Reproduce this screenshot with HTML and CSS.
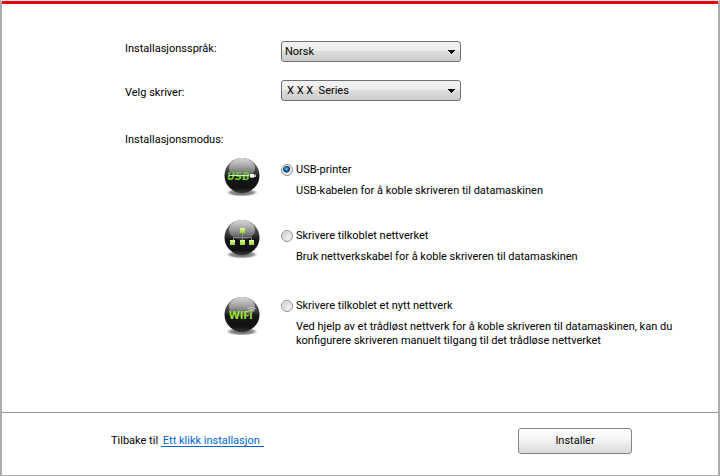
FILE: index.html
```html
<!DOCTYPE html>
<html lang="no">
<head>
<meta charset="utf-8">
<title>Installasjon</title>
<link rel="stylesheet" href="styles.css">
</head>
<body>
<form class="window">
  <main class="content">
    <div class="fields">
      <div class="field-labels">
        <label for="language">Installasjonsspråk:</label>
        <label for="printer">Velg skriver:</label>
      </div>
      <div class="field-inputs">
        <select class="select" id="language"><option>Norsk</option></select>
        <select class="select select-wide-inset" id="printer"><option>X X X&nbsp; Series</option></select>
      </div>
    </div>
    <h2 class="mode-title" id="mode">Installasjonsmodus:</h2>
    <div class="modes" role="radiogroup" aria-labelledby="mode">
      <div class="mode-icons">
        <svg class="icon" viewBox="0 0 38 40" aria-hidden="true">
          <defs>
            <linearGradient id="ball" x1="0" y1="0" x2="0" y2="1">
              <stop offset="0" stop-color="#777"/>
              <stop offset=".4" stop-color="#3c3c3c"/>
              <stop offset=".55" stop-color="#161616"/>
              <stop offset=".85" stop-color="#111"/>
              <stop offset="1" stop-color="#3a3a3a"/>
            </linearGradient>
            <linearGradient id="gloss" x1="0" y1="0" x2="0" y2="1">
              <stop offset="0" stop-color="#fff" stop-opacity=".7"/>
              <stop offset="1" stop-color="#fff" stop-opacity=".15"/>
            </linearGradient>
            <radialGradient id="shade">
              <stop offset="0" stop-color="#444" stop-opacity=".9"/>
              <stop offset=".7" stop-color="#777" stop-opacity=".8"/>
              <stop offset="1" stop-color="#999" stop-opacity="0"/>
            </radialGradient>
            <linearGradient id="node" x1="0" y1="0" x2="0" y2="1">
              <stop offset="0" stop-color="#e4f9a8"/>
              <stop offset="1" stop-color="#8edb1c"/>
            </linearGradient>
            <g id="orb">
              <ellipse cx="19" cy="35.500" rx="16" ry="4" fill="url(#shade)"/>
              <circle cx="19" cy="18.500" r="17.500" fill="url(#ball)"/>
              <ellipse cx="19" cy="11" rx="13" ry="10" fill="url(#gloss)"/>
            </g>
          </defs>
          <use href="#orb"/>
          <text class="icon-usb" x="4" y="23">USB</text>
          <path d="M6 18.500H26" stroke="#d8ecc4"/>
          <path d="M27 17h4v3.600h-4z" fill="#fff"/>
          <path d="M31 17.500h2v2.500h-2z" fill="#bbb"/>
        </svg>
        <svg class="icon" viewBox="0 0 38 40" aria-hidden="true">
          <use href="#orb"/>
          <path d="M19.500 14v9M10.500 23v-4.500h18V23" fill="none" stroke="#888"/>
          <g fill="url(#node)">
            <path d="M17 9h5v5h-5z"/><path d="M7 21h5v5H7zM17 21h5v5h-5zM26 21h5v5h-5z"/>
          </g>
        </svg>
        <svg class="icon icon-last" viewBox="0 0 38 40" aria-hidden="true">
          <use href="#orb"/>
          <text class="icon-wifi" x="6" y="23">WIFi</text>
          <path d="M24.500 13Q28 9.500 32.500 13M26 15Q28.500 12.500 31 15" fill="none" stroke="#c4c4c4" stroke-width="1.200"/>
        </svg>
      </div>
      <div class="mode-list">
        <div class="mode">
          <input class="radio" type="radio" name="mode" id="usb" checked>
          <label for="usb">USB-printer</label>
          <p class="mode-text">USB-kabelen for å koble skriveren til datamaskinen</p>
        </div>
        <div class="mode">
          <input class="radio" type="radio" name="mode" id="net">
          <label for="net">Skrivere tilkoblet nettverket</label>
          <p class="mode-text">Bruk nettverkskabel for å koble skriveren til datamaskinen</p>
        </div>
        <div class="mode mode-last">
          <input class="radio" type="radio" name="mode" id="wifi">
          <label for="wifi">Skrivere tilkoblet et nytt nettverk</label>
          <p class="mode-text">Ved hjelp av et trådløst nettverk for å koble skriveren til datamaskinen, kan du konfigurere skriveren manuelt tilgang til det trådløse nettverket</p>
        </div>
      </div>
    </div>
  </main>
  <footer class="footer">
    <p class="back">Tilbake til <a class="link" href="#">Ett klikk installasjon</a></p>
    <button class="install" type="button">Installer</button>
  </footer>
</form>
</body>
</html>
```

FILE: styles.css
```css
* { box-sizing: border-box; }
body, h2, p { margin: 0; }
body, select, button {
  font: 11px/14px Roboto, sans-serif;
  color: #000;
}
.window {
  display: flex;
  flex-direction: column;
  min-height: 100vh;
  background: #fff;
  border: solid #acacac;
  border-width: 1px 2px;
  border-top-color: #e8e8e8;
}
.content {
  flex: 1;
  padding: 37px 40px 24px 123px;
  border-top: 3px solid #e60012;
}
.fields { display: flex; }
.field-labels {
  display: flex;
  flex-direction: column;
  gap: 30px;
  width: 156px;
  padding-top: 1px;
}
.field-inputs {
  display: flex;
  flex-direction: column;
  gap: 18px;
}
.select {
  appearance: none;
  width: 180px;
  height: 21px;
  padding: 1px 20px 0 3px;
  border: 1px solid #707070;
  border-radius: 3px;
  background:
    linear-gradient(to bottom left, #000 50%, transparent 50%) right 8px top 8px / 4px 4px no-repeat,
    linear-gradient(to bottom right, #000 50%, transparent 50%) right 4px top 8px / 4px 4px no-repeat,
    linear-gradient(#f3f3f3, #ebebeb 50%, #dcdcdc 50%, #cdcdcd);
}
.select-wide-inset { padding-left: 5px; }
.mode-title {
  margin: 32px 0 10px;
  font-size: 11px;
  font-weight: normal;
}
.modes {
  display: flex;
  gap: 20px;
  padding-left: 98px;
}
.mode-icons {
  display: flex;
  flex-direction: column;
  flex: none;
  gap: 22px;
}
.icon { width: 38px; height: 40px; }
.icon-last { margin-top: 15px; }
.icon-usb {
  font: italic bold 11px "DejaVu Sans Condensed", sans-serif;
  fill: #6cc832;
}
.icon-wifi {
  font: bold 11px "Open Sans", sans-serif;
  fill: #9be62c;
}
.mode-list {
  display: flex;
  flex-direction: column;
  gap: 31px;
  padding-top: 6px;
}
.mode {
  display: grid;
  grid-template-columns: 12px 1fr;
  column-gap: 3px;
  row-gap: 7px;
  align-items: center;
}
.mode-last { margin-top: 4px; }
.mode-text { grid-column: 2; }
.radio {
  appearance: none;
  width: 12px;
  height: 12px;
  margin: 0;
  border: 1px solid #8e8f8f;
  border-radius: 50%;
  background: radial-gradient(circle at 65% 65%, #f4f4f4, #c8cacc 80%);
  box-shadow: inset 0 0 0 1px #f4f4f4;
}
.radio:checked {
  background: radial-gradient(circle at 45% 40%, #6fd0f2 0, #1c6c9c 2px, #0c2c4c 3px, #dfe4e8 4px);
}
.footer {
  display: flex;
  align-items: center;
  justify-content: space-between;
  height: 63px;
  padding: 0 86px 6px 109px;
  border-top: 1px solid #999;
}
.link {
  display: inline-block;
  padding: 0 4px 0 2px;
  line-height: 11px;
  color: #0066d6;
  text-decoration: none;
  border-bottom: 1px solid #0066d6;
}
.install {
  width: 114px;
  height: 26px;
  border: 1px solid #858585;
  border-radius: 3px;
  background: linear-gradient(#fff, #f2f2f3 50%, #d8d9db);
}
```
